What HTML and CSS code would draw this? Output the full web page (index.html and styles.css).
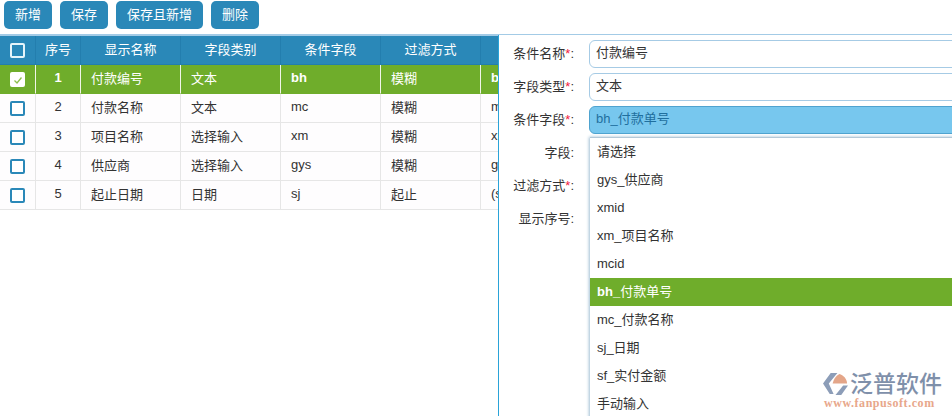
FILE: index.html
```html
<!DOCTYPE html>
<html lang="zh">
<head>
<meta charset="utf-8">
<title>条件设置</title>
<link rel="stylesheet" href="styles.css">
</head>
<body>
<div class="toolbar">
  <button class="btn">新增</button>
  <button class="btn">保存</button>
  <button class="btn btn-wide">保存且新增</button>
  <button class="btn">删除</button>
</div>
<div class="main">
  <div class="grid-wrap">
    <table class="grid">
      <colgroup>
        <col class="c-check"><col class="c-no"><col class="c-col"><col class="c-col"><col class="c-col"><col class="c-col"><col class="c-last">
      </colgroup>
      <thead>
        <tr><th class="box"><span class="cb cb-head"></span></th><th>序号</th><th>显示名称</th><th>字段类别</th><th>条件字段</th><th>过滤方式</th><th></th></tr>
      </thead>
      <tbody>
        <tr class="sel"><td class="ctr box"><span class="cb cb-on"><svg viewBox="0 0 14 14" width="14" height="14"><path d="M3.5 7.5l2.5 2.5 4.5-5.5" fill="none" stroke="#8cbf4d" stroke-width="1.3"/></svg></span></td><td class="ctr lat">1</td><td>付款编号</td><td>文本</td><td class="lat">bh</td><td>模糊</td><td class="lat">bh</td></tr>
        <tr><td class="ctr box"><span class="cb"></span></td><td class="ctr">2</td><td>付款名称</td><td>文本</td><td>mc</td><td>模糊</td><td>mc</td></tr>
        <tr><td class="ctr box"><span class="cb"></span></td><td class="ctr">3</td><td>项目名称</td><td>选择输入</td><td>xm</td><td>模糊</td><td>xm</td></tr>
        <tr><td class="ctr box"><span class="cb"></span></td><td class="ctr">4</td><td>供应商</td><td>选择输入</td><td>gys</td><td>模糊</td><td>gys</td></tr>
        <tr><td class="ctr box"><span class="cb"></span></td><td class="ctr">5</td><td>起止日期</td><td>日期</td><td>sj</td><td>起止</td><td>(sj</td></tr>
      </tbody>
    </table>
  </div>
  <div class="panel">
    <div class="row"><label class="lbl">条件名称<i>*</i>:</label><div class="field">付款编号</div></div>
    <div class="row"><label class="lbl">字段类型<i>*</i>:</label><div class="field">文本</div></div>
    <div class="row"><label class="lbl">条件字段<i>*</i>:</label><div class="field field-open">bh_付款单号</div></div>
    <div class="row"><label class="lbl">字段:</label></div>
    <div class="row"><label class="lbl">过滤方式<i>*</i>:</label></div>
    <div class="row"><label class="lbl">显示序号:</label></div>
    <ul class="menu">
      <li>请选择</li>
      <li>gys_供应商</li>
      <li>xmid</li>
      <li>xm_项目名称</li>
      <li>mcid</li>
      <li class="active"><b>bh_</b>付款单号</li>
      <li>mc_付款名称</li>
      <li>sj_日期</li>
      <li>sf_实付金额</li>
      <li>手动输入</li>
    </ul>
  </div>
</div>
<div class="logo">
  <svg class="logo-mark" viewBox="0 0 28 25" width="27" height="24">
    <path d="M9 1h7L7 12l5 11H8L1 12z" fill="#8c9db8"/>
    <path d="M18 2c4 1 8 5 8 10H11c1-4 3-8 7-10z" fill="#e4a689"/>
    <path d="M27 14l-7 10h-6l8-10z" fill="#8c9db8"/>
  </svg>
  <div class="logo-cn">泛普软件</div>
  <div class="logo-url">www.fanpusoft.com</div>
</div>
</body>
</html>
```

FILE: styles.css
```css
* { box-sizing: border-box; }
html, body { height: 100%; }
body {
  margin: 0;
  width: 952px;
  height: 416px;
  overflow: hidden;
  position: relative;
  background: #fff;
  color: #333;
  font-family: "Liberation Sans", "Noto Sans CJK SC", sans-serif;
  font-size: 13px;
}
.toolbar {
  display: flex;
  gap: 8px;
  height: 34px;
  padding: 1px 0 0 4px;
}
.btn {
  width: 48px;
  height: 28px;
  padding: 0 0 3px;
  border: 0;
  border-radius: 5px;
  background: #2a88b8;
  color: #fff;
  font: inherit;
}
.btn-wide { width: 87px; }
.main {
  display: flex;
  height: 382px;
  border-top: 1px solid #a3cbe6;
}
.grid-wrap {
  width: 498px;
  flex: none;
  overflow: hidden;
  border-top: 1px solid #a3cbe6;
}
.grid {
  width: 498px;
  table-layout: fixed;
  border-collapse: separate;
  border-spacing: 0;
}
.c-check { width: 36px; }
.c-no { width: 45px; }
.c-col { width: 100px; }
.c-last { width: 17px; }
.grid th {
  height: 29px;
  padding: 0 0 3px;
  background: #2a88b8;
  color: #fff;
  font-weight: 400;
  text-align: center;
  border-right: 1px solid #237eae;
  border-bottom: 1px solid #237eae;
}
.grid th:last-child { border-right: 0; }
.grid td {
  height: 29px;
  padding: 0 0 3px 10px;
  white-space: nowrap;
  overflow: hidden;
  border-right: 1px solid #e6e6e6;
  border-bottom: 1px solid #e6e6e6;
  background: #fefdfe;
}
.grid td:last-child { border-right: 0; }
.grid td.ctr { padding: 0 0 3px; text-align: center; }
.grid th.box, .grid td.box { padding: 0; }
.grid tr.sel td {
  background: #6fad2b;
  color: #fff;
  border-right-color: #f0f5e8;
  border-bottom-color: #6fad2b;
}
.grid td.lat { font-weight: 700; }
.cb {
  display: inline-block;
  width: 15px;
  height: 15px;
  vertical-align: middle;
  background: #fff;
  border: 2px solid #2a88b8;
  border-radius: 2px;
}
.cb-head { background: transparent; border-color: #e6f4fa; }
.cb-on {
  border: 0;
  padding: 1px 0 0 1px;
  background: #fff;
}
.cb-on svg { display: block; }
.panel {
  position: relative;
  flex: 1;
  min-width: 0;
  overflow: hidden;
  padding-top: 5px;
  border-left: 1px solid #2aa3d8;
}
.row {
  display: flex;
  align-items: center;
  height: 27px;
  margin-bottom: 6px;
}
.lbl {
  flex: none;
  width: 75px;
  padding-bottom: 2px;
  text-align: right;
  color: #333;
}
.lbl i { color: #f0203c; font-style: normal; }
.field {
  flex: none;
  width: 420px;
  height: 28px;
  margin-left: 15px;
  padding-left: 6px;
  line-height: 24px;
  color: #333;
  background: #fff;
  border: 1px solid #a6cbe5;
  border-radius: 6px;
}
.field-open {
  background: #77c7ee;
  border-color: #4fa3cf;
  color: #1f6f9e;
}
.menu {
  position: absolute;
  top: 102px;
  left: 91px;
  width: 420px;
  height: 300px;
  margin: 0;
  padding: 0;
  list-style: none;
  background: #fff;
  border-top: 1px solid #b4c9d8;
  box-shadow: -1px 0 3px #9fbdd2;
}
.menu li {
  height: 28px;
  padding-left: 7px;
  line-height: 27px;
  color: #333;
}
.menu li.active {
  background: #6fad2b;
  color: #fff;
}
.logo {
  position: absolute;
  left: 822px;
  top: 372px;
  width: 122px;
  display: grid;
  grid-template-columns: 27px 1fr;
  column-gap: 1px;
}
.logo-cn {
  font-size: 23px;
  font-weight: 500;
  line-height: 24px;
  color: #7f90aa;
  white-space: nowrap;
}
.logo-url {
  grid-column: 1 / -1;
  margin: 1px 0 0 2px;
  font-family: "Liberation Serif", serif;
  font-size: 12px;
  font-weight: 700;
  line-height: 12px;
  letter-spacing: 0.55px;
  color: #e8a78b;
  white-space: nowrap;
}
```
